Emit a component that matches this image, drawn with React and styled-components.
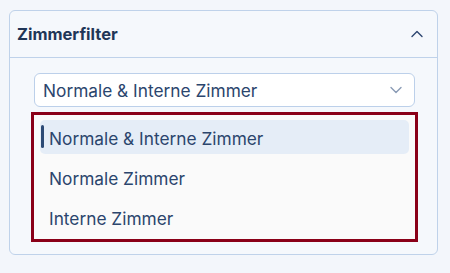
import React, { useState } from "react";
import styled, { createGlobalStyle } from "styled-components";

const Global = createGlobalStyle`
  html, body {
    margin: 0;
    padding: 0;
    background: #f3f6fb;
  }
  body {
    font-family: Inter, "Noto Sans", sans-serif;
    color: #2b456d;
  }
`;

const Page = styled.div`
  padding: 10px 12px 0 9px;
`;

const Card = styled.section`
  background: #f5f8fc;
  border: 1px solid #bfd2ea;
  border-radius: 6px;
`;

const Header = styled.div`
  display: flex;
  align-items: center;
  justify-content: space-between;
  height: 46px;
  padding: 0 14px 0 7px;
  border-bottom: 1px solid #bfd2ea;
`;

const Title = styled.h2`
  margin: 0;
  font-size: 16.5px;
  font-weight: 700;
  color: #1f3657;
`;

const Body = styled.div`
  padding: 15px 22px 15px 24px;
`;

const Select = styled.div`
  display: flex;
  align-items: center;
  justify-content: space-between;
  height: 32px;
  padding: 0 12px 0 8px;
  background: #fff;
  border: 1px solid #bcd0ea;
  border-radius: 6px;
  font-size: 17.3px;
`;

const Menu = styled.ul`
  list-style: none;
  margin: 8px 0 0;
  padding: 5px 6px;
  background: #fafafa;
  outline: 3px solid #8a0018;
  display: flex;
  flex-direction: column;
  gap: 6px;
`;

const Item = styled.li`
  position: relative;
  height: 34px;
  display: flex;
  align-items: center;
  padding: 2px 0 0 9px;
  box-sizing: border-box;
  border-radius: 5px;
  font-size: 17.3px;
  background: ${(p) => (p.$active ? "#e5edf7" : "transparent")};

  &::before {
    content: "";
    display: ${(p) => (p.$active ? "block" : "none")};
    position: absolute;
    left: 1px;
    top: 5px;
    bottom: 6px;
    width: 3px;
    border-radius: 2px;
    background: #2c4a75;
  }
`;

const Chevron = ({ up, color }) => (
  <svg width="12" height="8" viewBox="0 0 12 8" fill="none">
    <path
      d={up ? "M1 6.5 L6 1.5 L11 6.5" : "M1 1.5 L6 6.5 L11 1.5"}
      stroke={color}
      strokeWidth="1.4"
      strokeLinecap="round"
      strokeLinejoin="round"
    />
  </svg>
);

const options = ["Normale & Interne Zimmer", "Normale Zimmer", "Interne Zimmer"];

export default function App() {
  const [value] = useState(options[0]);
  return (
    <Page>
      <Global />
      <Card>
        <Header>
          <Title>Zimmerfilter</Title>
          <Chevron up color="#2d4670" />
        </Header>
        <Body>
          <Select>
            <span>{value}</span>
            <Chevron color="#8a9bb5" />
          </Select>
          <Menu>
            {options.map((o) => (
              <Item key={o} $active={o === value}>
                {o}
              </Item>
            ))}
          </Menu>
        </Body>
      </Card>
    </Page>
  );
}
